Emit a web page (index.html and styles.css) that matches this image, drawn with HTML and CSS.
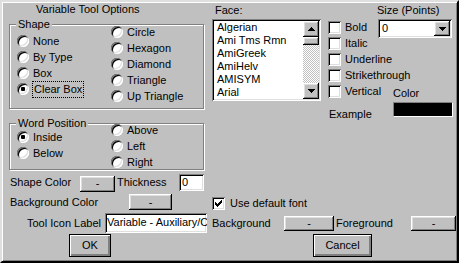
FILE: index.html
```html
<!DOCTYPE html>
<html>
<head>
    <link rel="stylesheet" href="styles.css">
</head>
<body>
    <div class="dialog">
        <div class="main">
            <div class="left-col">
                <div class="dialog-title">Variable Tool Options</div>

                <div class="group group-shape">
                    <span class="group-title">Shape</span>
                    <div class="radio-col radio-col-a">
                        <div class="radio-row"><span class="radio"></span><span>None</span></div>
                        <div class="radio-row"><span class="radio"></span><span>By Type</span></div>
                        <div class="radio-row"><span class="radio"></span><span>Box</span></div>
                        <div class="radio-row"><span class="radio checked"></span><span class="focused">Clear Box</span></div>
                    </div>
                    <div class="radio-col radio-col-b">
                        <div class="radio-row"><span class="radio"></span><span>Circle</span></div>
                        <div class="radio-row"><span class="radio"></span><span>Hexagon</span></div>
                        <div class="radio-row"><span class="radio"></span><span>Diamond</span></div>
                        <div class="radio-row"><span class="radio"></span><span>Triangle</span></div>
                        <div class="radio-row"><span class="radio"></span><span>Up Triangle</span></div>
                    </div>
                </div>

                <div class="group group-word">
                    <span class="group-title">Word Position</span>
                    <div class="radio-col radio-col-a">
                        <div class="radio-row"><span class="radio checked"></span><span>Inside</span></div>
                        <div class="radio-row"><span class="radio"></span><span>Below</span></div>
                    </div>
                    <div class="radio-col radio-col-b">
                        <div class="radio-row"><span class="radio"></span><span>Above</span></div>
                        <div class="radio-row"><span class="radio"></span><span>Left</span></div>
                        <div class="radio-row"><span class="radio"></span><span>Right</span></div>
                    </div>
                </div>

                <div class="field-row shape-color-row">
                    <span class="cell cell-shape-color">Shape Color</span>
                    <button class="btn btn-shape">-</button>
                    <span class="cell cell-thickness">Thickness</span>
                    <div class="sunken text-field thickness-field">0</div>
                </div>

                <div class="field-row bg-color-row">
                    <span class="cell cell-bg-color">Background Color</span>
                    <button class="btn btn-bg">-</button>
                </div>
            </div>

            <div class="right-col">
                <div class="font-top">
                    <div class="face-col">
                        <div class="col-label face-label">Face:</div>
                        <div class="sunken listbox">
                            <div class="list-items">
                                <div class="list-item">Algerian</div>
                                <div class="list-item">Ami Tms Rmn</div>
                                <div class="list-item">AmiGreek</div>
                                <div class="list-item">AmiHelv</div>
                                <div class="list-item">AMISYM</div>
                                <div class="list-item">Arial</div>
                            </div>
                            <div class="scrollbar">
                                <div class="btn scroll-btn">
                                    <svg width="7" height="4" viewBox="0 0 7 4"><path d="M3 0h1v1h1v1h1v1h1v1H0V3h1V2h1V1h1z" fill="#000"/></svg>
                                </div>
                                <div class="btn scroll-thumb"></div>
                                <div class="scroll-track"></div>
                                <div class="btn scroll-btn">
                                    <svg width="7" height="4" viewBox="0 0 7 4"><path d="M0 0h7v1H6v1H5v1H4v1H3V3H2V2H1V1H0z" fill="#000"/></svg>
                                </div>
                            </div>
                        </div>
                    </div>

                    <div class="styles-col">
                        <div class="check-row"><span class="check"></span><span>Bold</span></div>
                        <div class="check-row"><span class="check"></span><span>Italic</span></div>
                        <div class="check-row"><span class="check"></span><span>Underline</span></div>
                        <div class="check-row"><span class="check"></span><span>Strikethrough</span></div>
                        <div class="check-row"><span class="check"></span><span>Vertical</span></div>
                    </div>

                    <div class="size-col">
                        <div class="col-label">Size (Points)</div>
                        <div class="sunken combo">
                            <span class="combo-value">0</span>
                            <div class="btn combo-btn">
                                <svg width="7" height="4" viewBox="0 0 7 4"><path d="M0 0h7v1H6v1H5v1H4v1H3V3H2V2H1V1H0z" fill="#000"/></svg>
                            </div>
                        </div>
                        <div class="color-label">Color</div>
                    </div>
                </div>

                <div class="example-row">
                    <span class="example-label">Example</span>
                    <div class="color-swatch"></div>
                </div>

                <div class="check-row default-font-row">
                    <span class="check checked">
                        <svg width="13" height="13" viewBox="0 0 13 13"><path d="M3 5H4V6H5V7H6V6H7V5H8V4H9V3H10V6H9V7H8V8H7V9H6V10H5V9H4V8H3Z" fill="#000"/></svg>
                    </span>
                    <span>Use default font</span>
                </div>
            </div>
        </div>

        <div class="field-row icon-row">
            <span class="cell cell-icon-label">Tool Icon Label</span>
            <div class="sunken text-field icon-field">Variable - Auxiliary/C</div>
            <span class="cell cell-background">Background</span>
            <button class="btn btn-background">-</button>
            <span class="cell cell-foreground">Foreground</span>
            <button class="btn btn-foreground">-</button>
        </div>

        <div class="action-row">
            <button class="btn btn-action btn-ok">OK</button>
            <button class="btn btn-action btn-cancel">Cancel</button>
        </div>
    </div>
</body>
</html>
```

FILE: styles.css
```css
body {
    margin: 0;
    background: #c0c0c0;
    font-family: "Liberation Sans", Arial, sans-serif;
    font-size: 11px;
    line-height: 13px;
    color: #000;
}
.dialog {
    width: 459px;
    height: 263px;
    box-sizing: border-box;
    padding: 1px 0 0 7px;
    overflow: hidden;
    background: #c0c0c0;
    border: 2px solid;
    border-color: #dfdfdf #000 #000 #dfdfdf;
    box-shadow: inset 1px 1px 0 #fff, inset -1px -1px 0 #808080;
}
.main {
    display: grid;
    grid-template-columns: 197px 244px;
    column-gap: 6px;
}

/* bevels */
.sunken {
    background: #fff;
    box-shadow: inset 1px 1px 0 #808080, inset -1px -1px 0 #fff, inset 2px 2px 0 #000, inset -2px -2px 0 #dfdfdf;
    box-sizing: border-box;
    padding: 2px;
}
.btn {
    font: inherit;
    color: #000;
    background: #c0c0c0;
    border: none;
    margin: 0;
    padding: 0;
    box-sizing: border-box;
    box-shadow: inset -1px -1px 0 #000, inset 1px 1px 0 #fff, inset -2px -2px 0 #808080, inset 2px 2px 0 #dfdfdf;
}

/* left column */
.dialog-title {
    padding-left: 27px;
}
.group {
    position: relative;
    display: flex;
    box-sizing: border-box;
    width: 195px;
    border: 1px solid #808080;
    box-shadow: inset 1px 1px 0 #fff, 1px 1px 0 #fff;
}
.group-title {
    position: absolute;
    top: -7px;
    left: 6px;
    padding: 0 2px;
    background: #c0c0c0;
}
.group-shape {
    height: 85px;
    margin-top: 8px;
}
.group-word {
    height: 47px;
    margin-top: 14px;
}
.radio-col-a {
    width: 94px;
    padding-left: 7px;
    padding-top: 8px;
}
.group-word .radio-col-a {
    padding-top: 5px;
}
.radio-col-b {
    margin-top: -1px;
}
.group-word .radio-col-b {
    margin-top: -2px;
}
.radio-row {
    display: flex;
    align-items: center;
    gap: 4px;
    height: 16px;
    white-space: nowrap;
}
.radio {
    position: relative;
    flex: none;
    width: 12px;
    height: 12px;
    border-radius: 50%;
    background: #fff;
    box-shadow: inset 1px 1px 0 #808080, inset -1px -1px 0 #fff, inset 2px 2px 0 #000, inset -2px -2px 0 #dfdfdf;
}
.radio.checked::after {
    content: "";
    position: absolute;
    left: 4px;
    top: 4px;
    width: 4px;
    height: 4px;
    border-radius: 1px;
    background: #000;
}
.focused {
    padding: 1px 1px;
    outline: 1px dotted #000;
}

.field-row {
    display: flex;
    align-items: center;
    white-space: nowrap;
}
.cell {
    box-sizing: border-box;
    flex: none;
}
.shape-color-row {
    margin-top: 4px;
    height: 17px;
}
.cell-shape-color {
    width: 71px;
    padding-left: 1px;
}
.btn-shape {
    width: 35px;
    height: 16px;
    margin-top: 2px;
}
.cell-thickness {
    width: 64px;
    padding-left: 2px;
}
.text-field {
    overflow: hidden;
    white-space: nowrap;
    line-height: 13px;
}
.thickness-field {
    width: 25px;
    height: 17px;
    padding-left: 3px;
    margin-top: -1px;
}
.bg-color-row {
    margin-top: 3px;
    height: 16px;
}
.cell-bg-color {
    width: 120px;
    padding-left: 1px;
}
.btn-bg {
    width: 43px;
    height: 16px;
}

/* right column */
.right-col {
    display: flex;
    flex-direction: column;
    padding-top: 1px;
}
.font-top {
    display: flex;
}
.face-col {
    width: 109px;
}
.face-label {
    padding-left: 3px;
}
.listbox {
    display: flex;
    height: 82px;
    margin-top: 2px;
}
.list-items {
    flex: 1;
    overflow: hidden;
    padding-left: 3px;
    white-space: nowrap;
}
.scrollbar {
    display: flex;
    flex-direction: column;
    width: 16px;
}
.scroll-btn {
    display: flex;
    align-items: center;
    justify-content: center;
    height: 16px;
    flex: none;
}
.scroll-thumb {
    height: 8px;
    flex: none;
}
.scroll-track {
    flex: 1;
    background: repeating-conic-gradient(#fff 0 25%, #c0c0c0 0 50%);
    background-size: 2px 2px;
}
.styles-col {
    width: 49px;
    margin-left: 7px;
    padding-top: 15px;
}
.check-row {
    display: flex;
    align-items: center;
    gap: 4px;
    height: 16px;
    white-space: nowrap;
}
.check {
    flex: none;
    display: block;
    width: 13px;
    height: 13px;
    background: #fff;
    box-shadow: inset 1px 1px 0 #808080, inset -1px -1px 0 #fff, inset 2px 2px 0 #000, inset -2px -2px 0 #dfdfdf;
}
.check svg {
    display: block;
}
.size-col {
    width: 76px;
}
.combo {
    display: flex;
    align-items: center;
    width: 74px;
    height: 19px;
    margin: 2px 0 0 1px;
}
.combo-value {
    flex: 1;
    padding-left: 2px;
}
.combo-btn {
    display: flex;
    align-items: center;
    justify-content: center;
    width: 16px;
    height: 15px;
}
.color-label {
    margin: 49px 0 0 16px;
}
.example-row {
    display: flex;
    margin-top: 1px;
}
.example-label {
    width: 181px;
    box-sizing: border-box;
    padding: 6px 0 0 117px;
}
.color-swatch {
    width: 60px;
    height: 15px;
    box-sizing: border-box;
    background: #000;
    border: 1px solid;
    border-color: #808080 #fff #fff #808080;
}
.default-font-row {
    margin-top: auto;
    gap: 5px;
    margin-bottom: -1px;
}

/* bottom rows */
.icon-row {
    margin-top: 3px;
    height: 20px;
}
.cell-icon-label {
    width: 96px;
    padding-right: 4px;
    text-align: right;
}
.icon-field {
    width: 102px;
    height: 20px;
    padding: 3px 0 0 2px;
}
.cell-background {
    width: 72px;
    margin-left: 5px;
}
.btn-background {
    width: 50px;
    height: 15px;
}
.cell-foreground {
    width: 77px;
    padding-left: 2px;
}
.btn-foreground {
    width: 45px;
    height: 15px;
}
.action-row {
    display: flex;
    margin-top: 1px;
}
.btn-action {
    height: 23px;
    border: 1px solid #000;
    box-shadow: inset 1px 1px 0 #fff, inset -2px -2px 0 #808080;
}
.btn-ok {
    width: 42px;
    margin-left: 60px;
}
.btn-cancel {
    width: 59px;
    margin-left: 202px;
}
```
